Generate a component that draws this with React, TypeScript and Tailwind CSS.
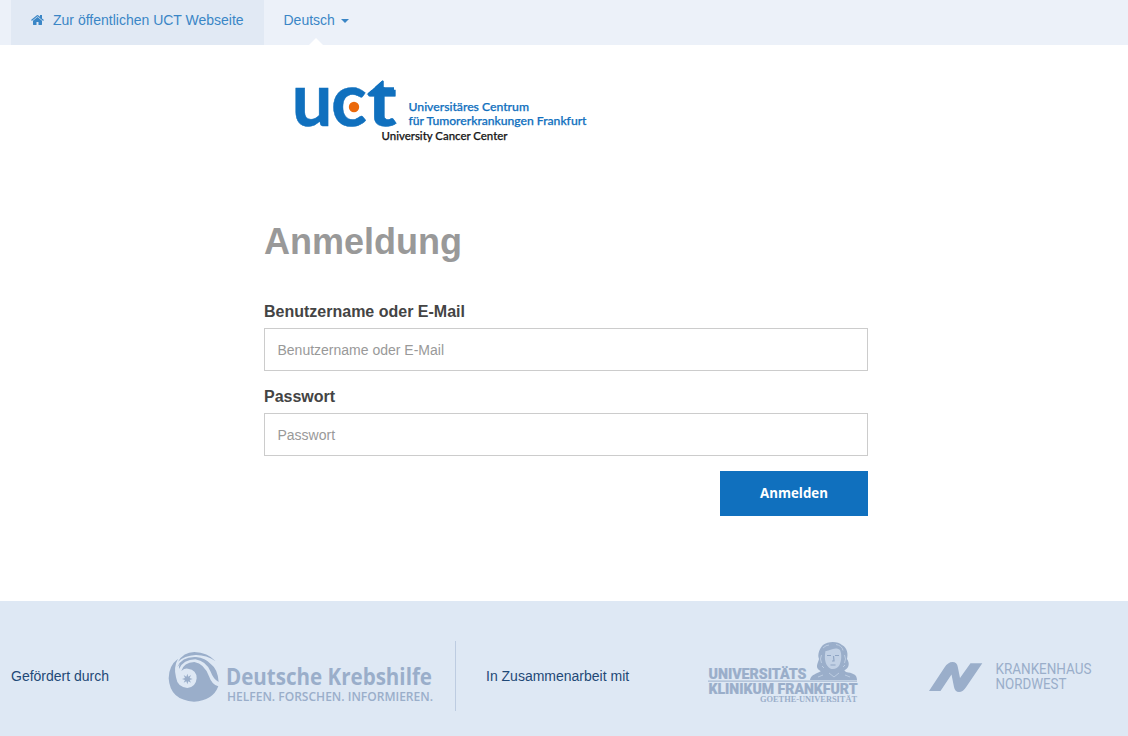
import React from 'react';

function HomeIcon() {
  return (
    <svg viewBox="64 0 1664 1792" className="mt-[3px] mr-[9px] h-[14px] w-[13px]" fill="currentColor" aria-hidden="true">
      <path d="M1472 992v480q0 26-19 45t-45 19h-384v-384h-256v384h-384q-26 0-45-19t-19-45v-480q0-1 .5-3t.5-3l575-474 575 474q1 2 1 6zm223-69-62 74q-8 9-21 11h-3q-13 0-21-7l-692-577-692 577q-12 8-24 7-13-2-21-11l-62-74q-8-10-7-23.5t11-21.5l719-599q32-26 76-26t76 26l244 204v-195q0-14 9-23t23-9h192q14 0 23 9t9 23v408l219 182q10 8 11 21.5t-7 23.5z" />
    </svg>
  );
}

function UctLogo() {
  return (
    <svg width="294" height="66" viewBox="294 79 294 66" className="block overflow-visible" role="img" aria-label="UCT">
      <defs>
        <clipPath id="arrow-tip">
          <path d="M366 95 382.3 80.5 383.5 81V87.3H400V130H366z" />
        </clipPath>
      </defs>
      <g fill="#1070be" stroke="#1070be" strokeWidth=".5" fontFamily="Lato, sans-serif" fontWeight="700">
        <text transform="translate(291.7 126.2) scale(0.95 0.99)" fontSize="76">u</text>
        <text transform="translate(331 126.2) scale(0.98 0.99)" fontSize="76">c</text>
        <g clipPath="url(#arrow-tip)">
          <text transform="translate(366.7 126.2) scale(1.06 0.92)" fontSize="76">t</text>
        </g>
      </g>
      <path d="M366.5 94.5 382.5 80.5 383.5 81V87.3H394V94.5z" fill="#1070be" />
      <circle cx="354" cy="107" r="5.2" fill="#eb690b" />
      <g fontFamily="Lato, sans-serif" fontSize="11.8" fontWeight="500" strokeWidth=".25">
        <text x="408.5" y="110.7" fill="#1070be" stroke="#1070be" textLength="120.5" lengthAdjust="spacingAndGlyphs">Universitäres Centrum</text>
        <text x="408.5" y="125.4" fill="#1070be" stroke="#1070be" textLength="178" lengthAdjust="spacingAndGlyphs">für Tumorerkrankungen Frankfurt</text>
        <text x="381.5" y="139.7" fill="#161616" stroke="#161616" textLength="126" lengthAdjust="spacingAndGlyphs">University Cancer Center</text>
      </g>
    </svg>
  );
}

function KrebshilfeLogo() {
  return (
    <svg width="266" height="54" viewBox="168 650 266 54" className="block shrink-0 overflow-visible">
      <g transform="translate(166 649) scale(0.3333)" fill="#9aaeca">
        <path d="M36 38Q52 10 85 9Q125 10 149 37Q120 17 88 18Q55 20 36 38Z" />
        <path d="M34 54Q48 22 90 24Q118 26 135 46Q155 60 158 99Q142 90 134 68Q120 36 88 31Q52 32 39 60Q37 50 43 44Z" />
        <path d="M36 29Q8 50 8 88Q12 154 84 158Q140 156 157 112Q138 108 129 82Q115 44 85 39Q53 40 46 66Q56 57 66 59Q92 62 92 88Q90 114 64 117Q34 114 30 85Q22 54 36 29Z" />
        <path d="m64 74 3 9 8-5-4 9 9 3-9 3 4 8-8-4-3 9-3-9-8 4 4-8-9-3 9-3-4-9 8 5z" />
      </g>
      <g fill="#9aaeca" fontFamily="'Open Sans', sans-serif">
        <text x="226" y="685.3" fontSize="22.8" fontWeight="700" textLength="206" lengthAdjust="spacingAndGlyphs">Deutsche Krebshilfe</text>
        <text x="227" y="700.7" fontSize="13" fontWeight="600" textLength="206" lengthAdjust="spacingAndGlyphs">HELFEN. FORSCHEN. INFORMIEREN.</text>
      </g>
    </svg>
  );
}

function KlinikumLogo() {
  return (
    <svg width="150" height="64" viewBox="708 641 150 64" className="block shrink-0 overflow-visible">
      <g fill="#9aaeca">
        <path d="M810 680C811 674 817 674 821 671L827 667H841L846 672C852 673 857 674 857 680Z" />
        <path d="M819 670C815 667 818 663 819 659C817 654 820 648 823 645C828 641 838 641 842 645C848 648 848 655 847 659C850 663 849 668 845 670Q841 673 838 670H826Q823 673 819 670Z" />
        <rect x="708" y="680.6" width="149" height="1" />
      </g>
      <path d="M825.5 651C829 652 834 646 840 650C842 654 841.5 661 839.5 665C837 670 830 670.5 827.5 666C824.5 662 824.5 656 825.5 651Z" fill="#c2d1e5" />
      <path d="M827 655.5h4M835 655.5h4M830.5 665h5M833.5 656l.5 5h-2" fill="none" stroke="#8fa5c4" strokeWidth="1.2" />
      <path d="M823 648q3-3 6-3M836 644.5q6 1 7 6M821.5 655q-2 4 0 8M844.5 655q2 4 0 8M822 666l2 2M843 667l2-2M829 673l5 4 5-4M818 677l5-2M850 677l-5-2" fill="none" stroke="#bccce1" strokeWidth="1" />
      <g fill="#9aaeca" fontFamily="Roboto, sans-serif" fontWeight="900" stroke="#9aaeca" strokeWidth=".2">
        <text x="708.5" y="679.3" fontSize="14.5" textLength="98" lengthAdjust="spacingAndGlyphs">UNIVERSITÄTS</text>
        <text x="708.5" y="694" fontSize="15" textLength="149" lengthAdjust="spacingAndGlyphs">KLINIKUM FRANKFURT</text>
      </g>
      <text x="760" y="702" fill="#9aaeca" fontFamily="'Liberation Serif', serif" fontSize="7.8" fontWeight="700" textLength="97" lengthAdjust="spacingAndGlyphs">GOETHE-UNIVERSITÄT</text>
    </svg>
  );
}

function NordwestLogo() {
  return (
    <svg width="164" height="34" viewBox="929 660 164 34" className="block shrink-0 overflow-visible">
      <path d="M929 691 944.5 667.5Q948 662 952.5 662Q957 662 957.8 667L960 678 970.5 663.2H982.3L966.5 686.5Q963 692 959 692Q955 692 954 687L951.5 674.5 940.5 691Z" fill="#9aaeca" />
      <g fill="#9aaeca" fontFamily="Roboto, sans-serif" fontSize="13.8">
        <text x="995.5" y="674.3" textLength="96" lengthAdjust="spacingAndGlyphs">KRANKENHAUS</text>
        <text x="995.5" y="689.3" textLength="71" lengthAdjust="spacingAndGlyphs">NORDWEST</text>
      </g>
    </svg>
  );
}

function Field({ label, type }: { label: string; type: string }) {
  return (
    <label className="mb-[15px] block">
      <span className="mb-[5px] block text-base leading-[22px] font-bold text-[#444]">{label}</span>
      <input
        type={type}
        placeholder={label}
        className="block h-[43px] w-full border border-[#ccc] bg-white px-[12.5px] text-sm text-[#555] placeholder:text-[#999]"
      />
    </label>
  );
}

export default function App() {
  return (
    <div className="flex h-[736px] flex-col overflow-hidden bg-white font-['Liberation_Sans',Arial,sans-serif] text-sm">
      <nav className="flex h-[45px] shrink-0 bg-[#ecf1f9] pl-[11px] leading-5 text-[#3a86c6]">
        <a href="#" className="flex w-[253px] bg-[#e1e9f4] pt-[10px] pl-5">
          <HomeIcon />
          Zur öffentlichen UCT Webseite
        </a>
        <a href="#" className="relative flex pt-[10px] pl-[19.5px]">
          Deutsch
          <span className="mt-[9px] ml-[6px] h-0 w-0 border-x-4 border-t-4 border-x-transparent border-t-[#3a86c6]" />
          <span className="absolute bottom-0 left-[45px] h-0 w-0 border-x-[7px] border-b-[7px] border-x-transparent border-b-white" />
        </a>
      </nav>

      <main className="mx-auto h-[556px] w-[604px] shrink-0 translate-x-[2px]">
        <div className="pt-[34px] pl-[30px]">
          <UctLogo />
        </div>
        <h1 className="mt-[77px] mb-[39px] text-4xl leading-10 font-bold text-[#999]">Anmeldung</h1>
        <form>
          <Field label="Benutzername oder E-Mail" type="text" />
          <Field label="Passwort" type="password" />
          <div className="flex justify-end">
            <button type="button" className="h-[45px] w-[148px] bg-[#1070be] font-['Open_Sans',sans-serif] text-[13.3px] font-bold text-white">
              Anmelden
            </button>
          </div>
        </form>
      </main>

      <footer className="flex h-[135px] shrink-0 items-start bg-[#dee8f4] pt-10 pl-[11px] text-[#1f4977]">
        <span className="w-[157px] pt-[25px] leading-5">Gefördert durch</span>
        <div className="pt-[9px]">
          <KrebshilfeLogo />
        </div>
        <div className="ml-[21px] h-[70px] w-px bg-[#bdcce1]" />
        <span className="ml-[30px] w-[222px] pt-[25px] leading-5">In Zusammenarbeit mit</span>
        <KlinikumLogo />
        <div className="ml-[71px] pt-[19px]">
          <NordwestLogo />
        </div>
      </footer>
    </div>
  );
}
